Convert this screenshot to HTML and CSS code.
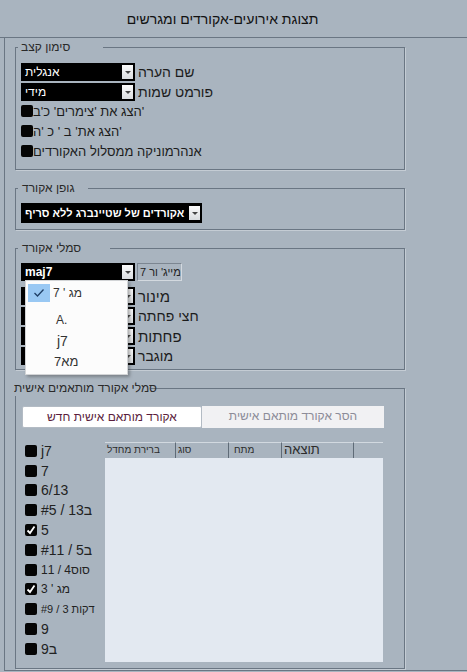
FILE: index.html
```html
<!DOCTYPE html>
<html lang="he">
<head>
    <meta charset="UTF-8" />
    <title>תצוגת אירועים-אקורדים ומגרשים</title>
    <link rel="stylesheet" href="styles.css">
</head>
<body>
    <div class="titlebar"><span class="t" dir="rtl">תצוגת אירועים-אקורדים ומגרשים</span></div>

    <div class="panel">
        <!-- סימון קצב -->
        <div class="group g1">
            <div class="legend lg1"><span class="t" dir="rtl">סימון קצב</span></div>
            <div class="gbody">
                <div class="row">
                    <div class="select"><span class="t" dir="rtl">אנגלית</span><span class="arrow"></span></div>
                    <span class="label t" dir="rtl">שם הערה</span>
                </div>
                <div class="row r2">
                    <div class="select"><span class="t" dir="rtl">מידי</span><span class="arrow"></span></div>
                    <span class="label t" dir="rtl">פורמט שמות</span>
                </div>
                <div class="check-row"><span class="box"></span><span class="t" dir="rtl">'הצג את 'צימרים' כ'ב</span></div>
                <div class="check-row"><span class="box"></span><span class="t" dir="rtl">'הצג את' ב ' כ 'ה</span></div>
                <div class="check-row"><span class="box"></span><span class="t" dir="rtl">אנהרמוניקה ממסלול האקורדים</span></div>
            </div>
        </div>

        <!-- גופן אקורד -->
        <div class="group g2">
            <div class="legend lg2"><span class="t" dir="rtl">גופן אקורד</span></div>
            <div class="gbody">
                <div class="select wide bold"><span class="t" dir="rtl">אקורדים של שטיינברג ללא סריף</span><span class="arrow"></span></div>
            </div>
        </div>

        <!-- סמלי אקורד -->
        <div class="group g3">
            <div class="legend lg3"><span class="t" dir="rtl">סמלי אקורד</span></div>
            <div class="gbody">
                <div class="row">
                    <div class="select bold"><span>maj7</span><span class="arrow"></span></div>
                    <div class="field">7 <bdi dir="rtl">מייג' ור</bdi></div>
                </div>
                <div class="sym-rows">
                    <div class="row"><div class="select"><span></span><span class="arrow"></span></div><span class="label big-label t" dir="rtl">מינור</span></div>
                    <div class="row"><div class="select"><span></span><span class="arrow"></span></div><span class="label t" dir="rtl">חצי פחתה</span></div>
                    <div class="row"><div class="select"><span></span><span class="arrow"></span></div><span class="label big-label t" dir="rtl">פחתות</span></div>
                    <div class="row"><div class="select"><span></span><span class="arrow"></span></div><span class="label t" dir="rtl">מוגבר</span></div>
                </div>
            </div>

            <!-- רשימה פתוחה -->
            <div class="popup">
                <div class="item first">
                    <span class="tick">
                        <svg width="12" height="10" viewBox="0 0 12 10"><polyline points="1.5,5 4.5,8 10.5,1.5" fill="none" stroke="#1f3f66" stroke-width="1.3"/></svg>
                    </span>
                    <span class="txt">7 ' מג</span>
                </div>
                <div class="item"><span class="tick none"></span><span class="txt">A.</span></div>
                <div class="item"><span class="tick none"></span><span class="txt it-big">j7</span></div>
                <div class="item"><span class="tick none"></span><span class="txt it-mid">7מא</span></div>
            </div>
        </div>

        <!-- סמלי אקורד מותאמים אישית -->
        <div class="group g4">
            <div class="legend lg4"><span class="t" dir="rtl">סמלי אקורד מותאמים אישית</span></div>
            <div class="gbody">
                <div class="buttons">
                    <div class="btn btn-new" dir="rtl">אקורד מותאם אישית חדש</div>
                    <div class="btn btn-off" dir="rtl">הסר אקורד מותאם אישית</div>
                </div>
                <div class="lower">
                    <div class="list">
                        <div class="li"><span class="box"></span><span>j7</span></div>
                        <div class="li"><span class="box"></span><span>7</span></div>
                        <div class="li"><span class="box"></span><span>6/13</span></div>
                        <div class="li"><span class="box"></span><span>#5 / 13ב</span></div>
                        <div class="li"><span class="box on"><svg width="10" height="10" viewBox="0 0 10 10"><polyline points="1.5,5.5 4,8 8.5,1.5" fill="none" stroke="#fff" stroke-width="1.8"/></svg></span><span>5</span></div>
                        <div class="li"><span class="box"></span><span>#11 / 5ב</span></div>
                        <div class="li sm"><span class="box"></span><span>11 / 4סוס</span></div>
                        <div class="li sm"><span class="box on"><svg width="10" height="10" viewBox="0 0 10 10"><polyline points="1.5,5.5 4,8 8.5,1.5" fill="none" stroke="#fff" stroke-width="1.8"/></svg></span><span>3 ' מג</span></div>
                        <div class="li xs"><span class="box"></span><span>#9 / 3 דקות</span></div>
                        <div class="li"><span class="box"></span><span>9</span></div>
                        <div class="li"><span class="box"></span><span>9ב</span></div>
                    </div>
                    <div class="table">
                        <div class="thead">
                            <div class="th c1 small" dir="rtl">ברירת מחדל</div>
                            <div class="th c2 small" dir="rtl">סוג</div>
                            <div class="th c3 small" dir="rtl">מתח</div>
                            <div class="th c4" dir="rtl">תוצאה</div>
                            <div class="th c5"></div>
                        </div>
                        <div class="tbody"></div>
                    </div>
                </div>
            </div>
        </div>
    </div>
</body>
</html>
```

FILE: styles.css
```css
* {
    margin: 0;
    padding: 0;
    box-sizing: border-box;
}
html, body {
    height: 100%;
}
body {
    background-color: #a9b4bf;
    font-family: "Liberation Sans", "DejaVu Sans", Arial, sans-serif;
    color: #1c1c1c;
    overflow: hidden;
}

/* עברית בתוך שורה משמאל לימין */
.t {
    direction: rtl;
    unicode-bidi: isolate;
    white-space: nowrap;
}

.titlebar {
    height: 38px;
    border-bottom: 1px solid #6a7683;
    text-align: center;
    padding: 11px 22px 0 0;
    font-size: 14px;
    color: #111;
}
.titlebar .t {
    display: inline-block;
}

.panel {
    margin-left: 4px;
    height: 633px;
    border-left: 1px solid #6a7683;
    border-bottom: 1px solid #6a7683;
    padding: 9px 0 0 10px;
}

.group {
    width: 390px;
    border: 1px solid #6a7683;
    box-shadow: 1px 1px 0 #c4ccd4;
    margin-bottom: 18px;
    position: relative;
}

.legend {
    height: 16px;
    line-height: 16px;
    margin-top: -9px;
    margin-left: 2px;
    background-color: #a9b4bf;
    font-size: 12px;
    color: #2a2a2a;
    padding-left: 3px;
    white-space: nowrap;
}
.legend .t { display: inline-block; }
.lg1 { width: 85px; }
.lg2 { width: 70px; padding-left: 4px; }
.lg3 { width: 92px; padding-left: 4px; }
.lg4 { width: 137px; margin-left: -2px; padding-left: 0; }

.gbody {
    padding: 0 5px;
}

.g1 .gbody { padding-top: 8px; padding-bottom: 8px; }
.g2 .gbody { padding-top: 7px; padding-bottom: 6px; }
.g3 .gbody { padding-top: 7px; padding-bottom: 4px; }
.g4 { margin-bottom: 0; height: 281px; }
.g4 .gbody { padding-top: 10px; }

.row {
    display: flex;
    align-items: center;
    height: 18px;
}
.r2 { margin-top: 2px; }

.select {
    width: 114px;
    height: 18px;
    background-color: #000;
    color: #fff;
    font-size: 12px;
    display: flex;
    align-items: center;
    justify-content: space-between;
    padding-left: 4px;
    white-space: nowrap;
}
.select.wide {
    width: 181px;
    height: 20px;
    font-size: 11px;
}
.select.bold {
    font-weight: bold;
}

.arrow {
    width: 11px;
    height: 14px;
    margin-right: 2px;
    flex-shrink: 0;
    background: linear-gradient(#fbfbfb, #d9dcdf);
    display: flex;
    align-items: center;
    justify-content: center;
}
.arrow::after {
    content: "";
    border-left: 3px solid transparent;
    border-right: 3px solid transparent;
    border-top: 3px solid #444;
}

.label {
    margin-left: 3px;
    font-size: 14px;
}
.big-label {
    font-size: 15px;
}

.field {
    margin-left: 2px;
    width: 45px;
    height: 18px;
    border: 1px solid #7c8691;
    border-right-color: #d3d9df;
    border-bottom-color: #d3d9df;
    font-size: 11px;
    line-height: 16px;
    padding-left: 2px;
    color: #222;
    white-space: nowrap;
    overflow: hidden;
}

.check-row {
    display: flex;
    align-items: center;
    height: 20px;
    font-size: 13px;
}
.box {
    width: 12px;
    height: 12px;
    border-radius: 2px;
    background-color: #050505;
    flex-shrink: 0;
    display: flex;
    align-items: center;
    justify-content: center;
}

.sym-rows {
    margin-top: 6px;
    display: flex;
    flex-direction: column;
    gap: 2px;
}

/* רשימה נפתחת מעל שאר התוכן */
.popup {
    position: absolute;
    left: 9px;
    top: 31px;
    width: 103px;
    height: 95px;
    background-color: #fcfcfc;
    border: 1px solid #d2d4d6;
    box-shadow: 2px 2px 3px rgba(40, 40, 40, 0.35);
    padding: 3px 2px;
    font-size: 12px;
    color: #333;
}
.item {
    display: flex;
    align-items: center;
    height: 21px;
    white-space: nowrap;
}
.item.first {
    height: 18px;
    margin-bottom: 7px;
}
.tick {
    width: 22px;
    height: 18px;
    margin-right: 3px;
    background-color: #99c8f3;
    display: flex;
    align-items: center;
    justify-content: center;
}
.tick.none {
    background: none;
}
.item:nth-child(2) .txt { padding-left: 3px; }
.item:nth-child(3) .txt { padding-left: 4px; }
.item:nth-child(4) .txt { padding-left: 1px; }
.it-big { font-size: 14px; }
.it-mid { font-size: 13px; }

.buttons {
    display: flex;
    margin-left: 1px;
    height: 22px;
}
.btn {
    height: 22px;
    line-height: 20px;
    text-align: center;
    font-size: 12px;
}
.btn-new {
    width: 180px;
    background-color: #fff;
    border: 1px solid #b3bbc4;
    border-radius: 2px;
    color: #5a1d3c;
}
.btn-off {
    width: 182px;
    background-color: #f1f1f3;
    color: #8c8c98;
}

.lower {
    display: flex;
    margin-top: 14px;
}
.list {
    width: 84px;
    padding-left: 4px;
    margin-top: -1px;
}
.li {
    display: flex;
    align-items: center;
    height: 19.8px;
    font-size: 14px;
    color: #222;
    white-space: nowrap;
}
.li .box {
    margin-right: 4px;
}
.li.sm { font-size: 12px; }
.li.xs { font-size: 11px; }

.table {
    width: 278px;
}
.thead {
    display: flex;
    height: 16px;
}
.th {
    height: 16px;
    border-top: 1px solid #d2d9e0;
    border-right: 1px solid #5f6b77;
    font-size: 13px;
    line-height: 14px;
    padding-left: 2px;
    color: #2c2c2c;
    text-align: left;
    white-space: nowrap;
    overflow: hidden;
}
.th.small {
    font-size: 10px;
}
.c1 { width: 71px; }
.c2 { width: 53px; }
.c3 { width: 53px; padding-left: 5px; }
.c4 { width: 72px; }
.c5 { width: 29px; border-right: none; }

.tbody {
    height: 204px;
    background-color: #e3e9f1;
}
```
